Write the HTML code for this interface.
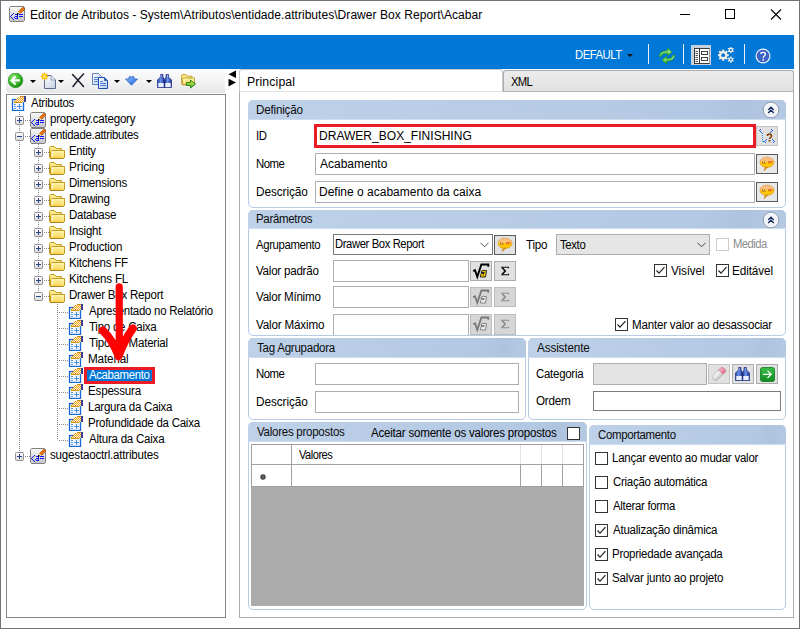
<!DOCTYPE html>
<html><head><meta charset="utf-8"><style>
html,body{margin:0;padding:0;}
body{width:800px;height:629px;position:relative;overflow:hidden;background:#fff;font-family:"Liberation Sans",sans-serif;}
body>div,body>svg{position:absolute;box-sizing:border-box;}
.t{white-space:pre;line-height:20px;font-size:12px;}
</style></head><body>
<div style="left:0px;top:0px;width:800px;height:629px;border:1px solid #727272;"></div>
<svg style="left:9px;top:6px;" width="16" height="16" viewBox="0 0 16 16"><use href="#attr" x="0" y="0" width="16" height="16"/></svg>
<div style="left:680px;top:14px;width:10px;height:1px;background:#000;"></div>
<div style="left:725px;top:9px;width:10px;height:10px;border:1px solid #000;"></div>
<svg style="left:770px;top:9px;" width="12" height="11" viewBox="0 0 12 11"><path d="M1 0.5 L11 10.5 M11 0.5 L1 10.5" stroke="#000" stroke-width="1.1"/></svg>
<div style="left:6px;top:35px;width:788px;height:34px;background:#0078d7;"></div>
<svg style="left:627px;top:54px;" width="6" height="3" viewBox="0 0 6 3"><path d="M0 0h6L3 3z" fill="#111"/></svg>
<div style="left:648px;top:44px;width:1px;height:20px;background:#e8f1fa;"></div>
<div style="left:683px;top:44px;width:1px;height:20px;background:#e8f1fa;"></div>
<div style="left:744px;top:44px;width:1px;height:20px;background:#e8f1fa;"></div>
<svg style="left:655px;top:44px;" width="24" height="24" viewBox="0 0 24 24">
<defs><linearGradient id="gRef" x1="0" y1="0" x2="0" y2="1"><stop offset="0" stop-color="#a6f29a"/><stop offset="1" stop-color="#4cc043"/></linearGradient></defs>
<path d="M4.3 12.8 C4.3 9 7 6.8 12.5 6.8 L12.5 4.2 L17 8 L12.5 11.6 L12.5 9.2 C9 9.2 6.8 10 5.6 12.8 Z" fill="url(#gRef)" stroke="#26961e" stroke-width="0.8"/>
<path d="M19.7 11 C19.7 14.8 17 17.2 11.5 17.2 L11.5 19.8 L7 16 L11.5 12.4 L11.5 14.8 C15 14.8 17.2 14 18.4 11 Z" fill="url(#gRef)" stroke="#26961e" stroke-width="0.8"/>
</svg>
<div style="left:691px;top:45px;width:20px;height:20px;background:#c5d1df;"></div>
<svg style="left:694px;top:48px;" width="16" height="16" viewBox="0 0 16 16"><rect x="0.5" y="0.5" width="15" height="15" fill="#fff" stroke="#3a3a3a"/><path d="M15.5 0.5 V15.5" stroke="#9a9a9a"/><path d="M5.5 0.5v15" stroke="#3a3a3a"/><path d="M1.5 3.5h2.5" stroke="#555"/><path d="M1.5 5.5h2.5" stroke="#555"/><path d="M1.5 7.5h2.5" stroke="#555"/><path d="M1.5 9.5h2.5" stroke="#555"/><path d="M1.5 11.5h2.5" stroke="#555"/><path d="M1.5 13.5h2.5" stroke="#555"/><rect x="7.5" y="3.5" width="6" height="3" fill="#fff" stroke="#444"/><rect x="7.5" y="9.5" width="6" height="3" fill="#fff" stroke="#444"/></svg>
<svg style="left:718px;top:47px;" width="17" height="17" viewBox="0 0 17 17"><circle cx="5.2" cy="8.2" r="4.2" fill="#f0ede6"/><rect x="4.20" y="2.60" width="2.0" height="2.20" fill="#f0ede6" transform="rotate(0.0 5.2 8.2)"/><rect x="4.20" y="2.60" width="2.0" height="2.20" fill="#f0ede6" transform="rotate(45.0 5.2 8.2)"/><rect x="4.20" y="2.60" width="2.0" height="2.20" fill="#f0ede6" transform="rotate(90.0 5.2 8.2)"/><rect x="4.20" y="2.60" width="2.0" height="2.20" fill="#f0ede6" transform="rotate(135.0 5.2 8.2)"/><rect x="4.20" y="2.60" width="2.0" height="2.20" fill="#f0ede6" transform="rotate(180.0 5.2 8.2)"/><rect x="4.20" y="2.60" width="2.0" height="2.20" fill="#f0ede6" transform="rotate(225.0 5.2 8.2)"/><rect x="4.20" y="2.60" width="2.0" height="2.20" fill="#f0ede6" transform="rotate(270.0 5.2 8.2)"/><rect x="4.20" y="2.60" width="2.0" height="2.20" fill="#f0ede6" transform="rotate(315.0 5.2 8.2)"/><circle cx="5.2" cy="8.2" r="1.9" fill="#0078d7"/><circle cx="12.8" cy="3.0" r="2.2" fill="#f0ede6"/><rect x="12.15" y="-0.20" width="1.3" height="1.80" fill="#f0ede6" transform="rotate(0.0 12.8 3.0)"/><rect x="12.15" y="-0.20" width="1.3" height="1.80" fill="#f0ede6" transform="rotate(60.0 12.8 3.0)"/><rect x="12.15" y="-0.20" width="1.3" height="1.80" fill="#f0ede6" transform="rotate(120.0 12.8 3.0)"/><rect x="12.15" y="-0.20" width="1.3" height="1.80" fill="#f0ede6" transform="rotate(180.0 12.8 3.0)"/><rect x="12.15" y="-0.20" width="1.3" height="1.80" fill="#f0ede6" transform="rotate(240.0 12.8 3.0)"/><rect x="12.15" y="-0.20" width="1.3" height="1.80" fill="#f0ede6" transform="rotate(300.0 12.8 3.0)"/><circle cx="12.8" cy="3.0" r="1.0" fill="#0078d7"/><circle cx="12.8" cy="12.6" r="2.2" fill="#f0ede6"/><rect x="12.15" y="9.40" width="1.3" height="1.80" fill="#f0ede6" transform="rotate(0.0 12.8 12.6)"/><rect x="12.15" y="9.40" width="1.3" height="1.80" fill="#f0ede6" transform="rotate(60.0 12.8 12.6)"/><rect x="12.15" y="9.40" width="1.3" height="1.80" fill="#f0ede6" transform="rotate(120.0 12.8 12.6)"/><rect x="12.15" y="9.40" width="1.3" height="1.80" fill="#f0ede6" transform="rotate(180.0 12.8 12.6)"/><rect x="12.15" y="9.40" width="1.3" height="1.80" fill="#f0ede6" transform="rotate(240.0 12.8 12.6)"/><rect x="12.15" y="9.40" width="1.3" height="1.80" fill="#f0ede6" transform="rotate(300.0 12.8 12.6)"/><circle cx="12.8" cy="12.6" r="1.0" fill="#0078d7"/></svg>
<svg style="left:755px;top:48px;" width="16" height="16" viewBox="0 0 16 16">
<circle cx="8" cy="8" r="7.5" fill="#f2f4fa"/>
<circle cx="8" cy="8" r="6.3" fill="#3a63c8"/>
<path d="M5.8 6 C5.8 3.8 10.4 3.8 10.4 6 C10.4 7.8 8.2 8 8.2 10.2" stroke="#fff" stroke-width="1.35" fill="none"/>
<rect x="7.5" y="11.2" width="1.5" height="1.5" fill="#fff"/>
</svg>
<div style="left:6px;top:69px;width:219px;height:24px;background:linear-gradient(#fdfdfd,#f1f1f1 60%,#e6e6e6);border-radius:0 0 0 3px;"></div>
<svg style="left:8px;top:73px;" width="16" height="16" viewBox="0 0 16 16"><defs><radialGradient id="gBack" cx="0.35" cy="0.3" r="0.75"><stop offset="0" stop-color="#8ee66e"/><stop offset="0.6" stop-color="#38b82a"/><stop offset="1" stop-color="#12880e"/></radialGradient></defs>
<circle cx="7.5" cy="7.4" r="7.3" fill="url(#gBack)" stroke="#1a8a14" stroke-width="0.6"/>
<path d="M7.6 3.3 L3.6 7.4 L7.6 11.5 M4.3 7.4 H11.8" stroke="#fff" stroke-width="2.2" fill="none"/></svg>
<svg style="left:30px;top:80px;" width="6" height="3" viewBox="0 0 6 3"><path d="M0 0h6L3 3z" fill="#000"/></svg>
<svg style="left:40px;top:72px;" width="17" height="17" viewBox="0 0 17 17"><defs><linearGradient id="gPg" x1="0" y1="0" x2="1" y2="1"><stop offset="0" stop-color="#ffffff"/><stop offset="1" stop-color="#c4cfe0"/></linearGradient><radialGradient id="gStar"><stop offset="0" stop-color="#fff4a0"/><stop offset="0.5" stop-color="#ffc800"/><stop offset="1" stop-color="#ff8a00"/></radialGradient></defs>
<path d="M4.5 3.5 H11 L15.5 8 V16.5 H4.5 Z" fill="url(#gPg)" stroke="#5a6a88"/>
<path d="M11 3.5 V8 H15.5" fill="#e8edf5" stroke="#7a8aa8" stroke-width="0.8"/>
<polygon points="8.70,4.50 6.90,5.49 7.47,7.47 5.49,6.90 4.50,8.70 3.51,6.90 1.53,7.47 2.10,5.49 0.30,4.50 2.10,3.51 1.53,1.53 3.51,2.10 4.50,0.30 5.49,2.10 7.47,1.53 6.90,3.51" fill="url(#gStar)"/></svg>
<svg style="left:58px;top:80px;" width="6" height="3" viewBox="0 0 6 3"><path d="M0 0h6L3 3z" fill="#000"/></svg>
<svg style="left:71px;top:73px;" width="14" height="15" viewBox="0 0 14 15"><path d="M1.5 1.5 Q6 6 12.5 13.5" stroke="#1a1a2a" stroke-width="1.5" fill="none" stroke-linecap="round"/><path d="M12.5 1 Q7 6.5 2 13.5" stroke="#1a1a2a" stroke-width="1.5" fill="none" stroke-linecap="round"/></svg>
<svg style="left:92px;top:73px;" width="16" height="16" viewBox="0 0 16 16"><defs><linearGradient id="gDoc" x1="0" y1="0" x2="1" y2="1"><stop offset="0" stop-color="#ffffff"/><stop offset="1" stop-color="#b8cdf0"/></linearGradient></defs>
<path d="M0.5 0.5 H6.5 L9.5 3.5 V11.5 H0.5 Z" fill="url(#gDoc)" stroke="#3a64b4" stroke-width="0.8"/>
<path d="M2 4.5h5M2 6.5h5M2 8.5h5" stroke="#4a7cd0" stroke-width="0.9"/>
<path d="M6.5 4.5 H12.5 L15.5 7.5 V15.5 H6.5 Z" fill="url(#gDoc)" stroke="#1f4ea8"/>
<path d="M8 8.5h3M8 10.5h6M8 12.5h6" stroke="#3a72cc" stroke-width="0.9"/>
<path d="M12.5 4.5 V7.5 H15.5" fill="#2a5ab8" stroke="#2a5ab8" stroke-width="0.8"/></svg>
<svg style="left:114px;top:80px;" width="6" height="3" viewBox="0 0 6 3"><path d="M0 0h6L3 3z" fill="#000"/></svg>
<svg style="left:125px;top:76px;" width="13" height="10" viewBox="0 0 13 10"><defs><linearGradient id="gDn" x1="0" y1="0" x2="1" y2="1"><stop offset="0" stop-color="#8ec4ff"/><stop offset="1" stop-color="#1a5ed8"/></linearGradient></defs>
<path d="M4 0.8 H9 V3 H12.5 L6.5 9.2 L0.5 3 H4 Z" fill="url(#gDn)" stroke="#1f56c0" stroke-width="0.7"/></svg>
<svg style="left:146px;top:80px;" width="6" height="3" viewBox="0 0 6 3"><path d="M0 0h6L3 3z" fill="#000"/></svg>
<svg style="left:157px;top:74px;" width="15" height="14" viewBox="0 0 15 14"><defs><linearGradient id="gB3" x1="0" y1="0" x2="1" y2="0"><stop offset="0" stop-color="#24409a"/><stop offset="0.45" stop-color="#6a92e8"/><stop offset="1" stop-color="#1c3090"/></linearGradient></defs>
<path d="M3.5 0.5 H6 V3 L7.5 5.5 V13.5 H0.5 V6 L3.5 3 Z" fill="url(#gB3)" stroke="#1a2a80" stroke-width="0.7"/>
<path d="M9 0.5 H11.5 V3 L14.5 6 V13.5 H7.5 V5.5 L9 3 Z" fill="url(#gB3)" stroke="#1a2a80" stroke-width="0.7"/>
<rect x="6.5" y="6" width="2" height="3" fill="#1c2c80"/>
<rect x="1.3" y="9" width="5.4" height="4" fill="#e8eefc"/><rect x="8.3" y="9" width="5.4" height="4" fill="#e8eefc"/>
<path d="M4 1.5v1.5M10.5 1.5v1.5" stroke="#c8d8ff" stroke-width="0.8"/></svg>
<svg style="left:181px;top:73px;" width="16" height="16" viewBox="0 0 16 16"><use href="#fold" x="0" y="1" width="14" height="11.4"/>
<defs><linearGradient id="gArr" x1="0" y1="0" x2="0" y2="1"><stop offset="0" stop-color="#c8f060"/><stop offset="1" stop-color="#5ab020"/></linearGradient></defs>
<path d="M5.5 9.5 H9.5 V7 L14.5 11 L9.5 15 V12.5 H5.5 Z" fill="url(#gArr)" stroke="#1f7a10" stroke-width="0.9" stroke-linejoin="round"/></svg>
<svg style="left:228px;top:70px;" width="9" height="17" viewBox="0 0 9 17"><path d="M8 0.5 V8 L0.5 4.2 Z" fill="#000"/><path d="M0.5 8.8 V16.5 L8 12.6 Z" fill="#000"/></svg>
<div style="left:6px;top:94px;width:220px;height:524px;border:1px solid #828790;background:#fff;"></div>
<div style="left:84px;top:367px;width:71px;height:17px;background:#0078d7;border:3px solid #ec1c24;"></div>
<svg style="left:0;top:0" width="800" height="629" viewBox="0 0 800 629">

<defs>
<linearGradient id="gGray" x1="0" y1="0" x2="0" y2="1"><stop offset="0" stop-color="#fbfbfb"/><stop offset="1" stop-color="#c4c4c4"/></linearGradient>
<linearGradient id="gExp" x1="0" y1="0" x2="0" y2="1"><stop offset="0" stop-color="#ffffff"/><stop offset="1" stop-color="#d8d8d8"/></linearGradient>
<linearGradient id="gFold" x1="0" y1="0" x2="0" y2="1"><stop offset="0" stop-color="#fff7b0"/><stop offset="1" stop-color="#f7cf4a"/></linearGradient>
<symbol id="tbl" viewBox="0 0 16 17">
<rect x="2.5" y="5.5" width="11" height="11" fill="#f6faff" stroke="#1468d8" stroke-width="1.3"/>
<path d="M4 10.5h2M4 12.5h2M4 14.5h2" stroke="#5d9de8"/>
<path d="M7 12.5h5M9.5 10v5" stroke="#4d90e4" stroke-width="1.2"/>
<rect x="10" y="2" width="1" height="1" fill="#d98a10"/><rect x="11" y="2" width="1" height="1" fill="#d98a10"/><rect x="12" y="2" width="1" height="1" fill="#d98a10"/><rect x="13" y="2" width="1" height="1" fill="#d98a10"/><rect x="8" y="3" width="1" height="1" fill="#d98a10"/><rect x="9" y="3" width="1" height="1" fill="#fff4d0"/><rect x="10" y="3" width="1" height="1" fill="#eea428"/><rect x="11" y="3" width="1" height="1" fill="#fff4d0"/><rect x="12" y="3" width="1" height="1" fill="#eea428"/><rect x="13" y="3" width="1" height="1" fill="#fff4d0"/><rect x="7" y="4" width="1" height="1" fill="#d98a10"/><rect x="8" y="4" width="1" height="1" fill="#fff4d0"/><rect x="9" y="4" width="1" height="1" fill="#eea428"/><rect x="10" y="4" width="1" height="1" fill="#fff4d0"/><rect x="11" y="4" width="1" height="1" fill="#eea428"/><rect x="12" y="4" width="1" height="1" fill="#fff4d0"/><rect x="13" y="4" width="1" height="1" fill="#eea428"/><rect x="6" y="5" width="1" height="1" fill="#d98a10"/><rect x="7" y="5" width="1" height="1" fill="#fff4d0"/><rect x="8" y="5" width="1" height="1" fill="#eea428"/><rect x="9" y="5" width="1" height="1" fill="#fff4d0"/><rect x="10" y="5" width="1" height="1" fill="#eea428"/><rect x="11" y="5" width="1" height="1" fill="#fff4d0"/><rect x="12" y="5" width="1" height="1" fill="#eea428"/><rect x="13" y="5" width="1" height="1" fill="#fff4d0"/><rect x="5" y="6" width="1" height="1" fill="#d98a10"/><rect x="6" y="6" width="1" height="1" fill="#fff4d0"/><rect x="7" y="6" width="1" height="1" fill="#eea428"/><rect x="8" y="6" width="1" height="1" fill="#fff4d0"/><rect x="9" y="6" width="1" height="1" fill="#eea428"/><rect x="10" y="6" width="1" height="1" fill="#fff4d0"/><rect x="11" y="6" width="1" height="1" fill="#eea428"/><rect x="12" y="6" width="1" height="1" fill="#fff4d0"/><rect x="13" y="6" width="1" height="1" fill="#eea428"/><rect x="4" y="7" width="1" height="1" fill="#d98a10"/><rect x="5" y="7" width="1" height="1" fill="#fff4d0"/><rect x="6" y="7" width="1" height="1" fill="#eea428"/><rect x="7" y="7" width="1" height="1" fill="#fff4d0"/><rect x="8" y="7" width="1" height="1" fill="#eea428"/><rect x="9" y="7" width="1" height="1" fill="#fff4d0"/><rect x="10" y="7" width="1" height="1" fill="#eea428"/><rect x="11" y="7" width="1" height="1" fill="#fff4d0"/><rect x="12" y="7" width="1" height="1" fill="#eea428"/><rect x="13" y="7" width="1" height="1" fill="#fff4d0"/><rect x="4" y="8" width="1" height="1" fill="#d98a10"/><rect x="5" y="8" width="1" height="1" fill="#d98a10"/><rect x="6" y="8" width="1" height="1" fill="#d98a10"/><rect x="7" y="8" width="1" height="1" fill="#d98a10"/><rect x="8" y="8" width="1" height="1" fill="#d98a10"/><rect x="9" y="8" width="1" height="1" fill="#d98a10"/><rect x="10" y="8" width="1" height="1" fill="#d98a10"/><rect x="11" y="8" width="1" height="1" fill="#d98a10"/>
<rect x="14" y="2" width="2" height="6" fill="#3a3f90"/>
</symbol>
<symbol id="attr" viewBox="0 0 16 16">
<path d="M1.5 0.5 H14.5 L15.5 1.5 V14.5 L14.5 15.5 H1.5 L0.5 14.5 V1.5 Z" fill="url(#gGray)" stroke="#808080"/>
<g fill="#1414ff">
<rect x="4" y="7" width="1" height="1"/><rect x="3" y="8" width="1" height="1"/><rect x="2" y="9" width="1" height="1"/><rect x="1" y="10" width="1" height="1"/><rect x="2" y="11" width="1" height="1"/><rect x="3" y="12" width="1" height="1"/><rect x="4" y="13" width="1" height="1"/>
<rect x="6" y="8" width="3" height="1"/><rect x="8" y="9" width="1" height="4"/><rect x="6" y="10" width="3" height="1"/><rect x="5" y="11" width="1" height="1"/><rect x="6" y="12" width="3" height="1"/>
<rect x="10" y="8" width="4" height="1"/><rect x="10" y="10" width="4" height="1"/>
</g>
<path d="M9.5 5.5 L14 1 L16 3 L11.5 7.5 Z" fill="#e6730c" stroke="#9a4a08" stroke-width="0.6"/>
<path d="M9.5 5.5 L11.5 7.5 L9.5 8 L8.7 7.2 Z" fill="#f8d89a"/>
<path d="M8.7 7.2 L9.5 8 L8 8.5 Z" fill="#000" stroke="#000" stroke-width="0.8"/>
</symbol>
<symbol id="fold" viewBox="0 0 16 13">
<path d="M0.5 11.5 V1.5 L1.5 0.5 H5.5 L7 2.5 H12.5 V4.5" fill="#fbe88a" stroke="#bf9a24"/>
<path d="M2.5 4.5 H15.5 V11.5 L14.5 12.5 H2.5 L1.5 11.5 V5.5 Z" fill="url(#gFold)" stroke="#bf9a24"/>
<path d="M1 12.5 H14" stroke="#a8861a"/>
<path d="M3.5 6 V11" stroke="#fffbd8"/>
<path d="M13.5 6 V11" stroke="#fff4b8"/>
</symbol>
<symbol id="plus" viewBox="0 0 9 9">
<rect x="0.5" y="0.5" width="8" height="8" rx="1" fill="url(#gExp)" stroke="#8f8f8f"/>
<path d="M2 4.5h5M4.5 2v5" stroke="#27468a"/>
</symbol>
<symbol id="minus" viewBox="0 0 9 9">
<rect x="0.5" y="0.5" width="8" height="8" rx="1" fill="url(#gExp)" stroke="#8f8f8f"/>
<path d="M2 4.5h5" stroke="#27468a"/>
</symbol>
</defs>

<rect x="19" y="112" width="1" height="1" fill="#8a8a8a"/>
<rect x="19" y="114" width="1" height="1" fill="#8a8a8a"/>
<rect x="19" y="116" width="1" height="1" fill="#8a8a8a"/>
<rect x="19" y="118" width="1" height="1" fill="#8a8a8a"/>
<rect x="19" y="120" width="1" height="1" fill="#8a8a8a"/>
<rect x="19" y="122" width="1" height="1" fill="#8a8a8a"/>
<rect x="19" y="124" width="1" height="1" fill="#8a8a8a"/>
<rect x="19" y="126" width="1" height="1" fill="#8a8a8a"/>
<rect x="19" y="128" width="1" height="1" fill="#8a8a8a"/>
<rect x="19" y="130" width="1" height="1" fill="#8a8a8a"/>
<rect x="19" y="132" width="1" height="1" fill="#8a8a8a"/>
<rect x="19" y="134" width="1" height="1" fill="#8a8a8a"/>
<rect x="19" y="136" width="1" height="1" fill="#8a8a8a"/>
<rect x="19" y="138" width="1" height="1" fill="#8a8a8a"/>
<rect x="19" y="140" width="1" height="1" fill="#8a8a8a"/>
<rect x="19" y="142" width="1" height="1" fill="#8a8a8a"/>
<rect x="19" y="144" width="1" height="1" fill="#8a8a8a"/>
<rect x="19" y="146" width="1" height="1" fill="#8a8a8a"/>
<rect x="19" y="148" width="1" height="1" fill="#8a8a8a"/>
<rect x="19" y="150" width="1" height="1" fill="#8a8a8a"/>
<rect x="19" y="152" width="1" height="1" fill="#8a8a8a"/>
<rect x="19" y="154" width="1" height="1" fill="#8a8a8a"/>
<rect x="19" y="156" width="1" height="1" fill="#8a8a8a"/>
<rect x="19" y="158" width="1" height="1" fill="#8a8a8a"/>
<rect x="19" y="160" width="1" height="1" fill="#8a8a8a"/>
<rect x="19" y="162" width="1" height="1" fill="#8a8a8a"/>
<rect x="19" y="164" width="1" height="1" fill="#8a8a8a"/>
<rect x="19" y="166" width="1" height="1" fill="#8a8a8a"/>
<rect x="19" y="168" width="1" height="1" fill="#8a8a8a"/>
<rect x="19" y="170" width="1" height="1" fill="#8a8a8a"/>
<rect x="19" y="172" width="1" height="1" fill="#8a8a8a"/>
<rect x="19" y="174" width="1" height="1" fill="#8a8a8a"/>
<rect x="19" y="176" width="1" height="1" fill="#8a8a8a"/>
<rect x="19" y="178" width="1" height="1" fill="#8a8a8a"/>
<rect x="19" y="180" width="1" height="1" fill="#8a8a8a"/>
<rect x="19" y="182" width="1" height="1" fill="#8a8a8a"/>
<rect x="19" y="184" width="1" height="1" fill="#8a8a8a"/>
<rect x="19" y="186" width="1" height="1" fill="#8a8a8a"/>
<rect x="19" y="188" width="1" height="1" fill="#8a8a8a"/>
<rect x="19" y="190" width="1" height="1" fill="#8a8a8a"/>
<rect x="19" y="192" width="1" height="1" fill="#8a8a8a"/>
<rect x="19" y="194" width="1" height="1" fill="#8a8a8a"/>
<rect x="19" y="196" width="1" height="1" fill="#8a8a8a"/>
<rect x="19" y="198" width="1" height="1" fill="#8a8a8a"/>
<rect x="19" y="200" width="1" height="1" fill="#8a8a8a"/>
<rect x="19" y="202" width="1" height="1" fill="#8a8a8a"/>
<rect x="19" y="204" width="1" height="1" fill="#8a8a8a"/>
<rect x="19" y="206" width="1" height="1" fill="#8a8a8a"/>
<rect x="19" y="208" width="1" height="1" fill="#8a8a8a"/>
<rect x="19" y="210" width="1" height="1" fill="#8a8a8a"/>
<rect x="19" y="212" width="1" height="1" fill="#8a8a8a"/>
<rect x="19" y="214" width="1" height="1" fill="#8a8a8a"/>
<rect x="19" y="216" width="1" height="1" fill="#8a8a8a"/>
<rect x="19" y="218" width="1" height="1" fill="#8a8a8a"/>
<rect x="19" y="220" width="1" height="1" fill="#8a8a8a"/>
<rect x="19" y="222" width="1" height="1" fill="#8a8a8a"/>
<rect x="19" y="224" width="1" height="1" fill="#8a8a8a"/>
<rect x="19" y="226" width="1" height="1" fill="#8a8a8a"/>
<rect x="19" y="228" width="1" height="1" fill="#8a8a8a"/>
<rect x="19" y="230" width="1" height="1" fill="#8a8a8a"/>
<rect x="19" y="232" width="1" height="1" fill="#8a8a8a"/>
<rect x="19" y="234" width="1" height="1" fill="#8a8a8a"/>
<rect x="19" y="236" width="1" height="1" fill="#8a8a8a"/>
<rect x="19" y="238" width="1" height="1" fill="#8a8a8a"/>
<rect x="19" y="240" width="1" height="1" fill="#8a8a8a"/>
<rect x="19" y="242" width="1" height="1" fill="#8a8a8a"/>
<rect x="19" y="244" width="1" height="1" fill="#8a8a8a"/>
<rect x="19" y="246" width="1" height="1" fill="#8a8a8a"/>
<rect x="19" y="248" width="1" height="1" fill="#8a8a8a"/>
<rect x="19" y="250" width="1" height="1" fill="#8a8a8a"/>
<rect x="19" y="252" width="1" height="1" fill="#8a8a8a"/>
<rect x="19" y="254" width="1" height="1" fill="#8a8a8a"/>
<rect x="19" y="256" width="1" height="1" fill="#8a8a8a"/>
<rect x="19" y="258" width="1" height="1" fill="#8a8a8a"/>
<rect x="19" y="260" width="1" height="1" fill="#8a8a8a"/>
<rect x="19" y="262" width="1" height="1" fill="#8a8a8a"/>
<rect x="19" y="264" width="1" height="1" fill="#8a8a8a"/>
<rect x="19" y="266" width="1" height="1" fill="#8a8a8a"/>
<rect x="19" y="268" width="1" height="1" fill="#8a8a8a"/>
<rect x="19" y="270" width="1" height="1" fill="#8a8a8a"/>
<rect x="19" y="272" width="1" height="1" fill="#8a8a8a"/>
<rect x="19" y="274" width="1" height="1" fill="#8a8a8a"/>
<rect x="19" y="276" width="1" height="1" fill="#8a8a8a"/>
<rect x="19" y="278" width="1" height="1" fill="#8a8a8a"/>
<rect x="19" y="280" width="1" height="1" fill="#8a8a8a"/>
<rect x="19" y="282" width="1" height="1" fill="#8a8a8a"/>
<rect x="19" y="284" width="1" height="1" fill="#8a8a8a"/>
<rect x="19" y="286" width="1" height="1" fill="#8a8a8a"/>
<rect x="19" y="288" width="1" height="1" fill="#8a8a8a"/>
<rect x="19" y="290" width="1" height="1" fill="#8a8a8a"/>
<rect x="19" y="292" width="1" height="1" fill="#8a8a8a"/>
<rect x="19" y="294" width="1" height="1" fill="#8a8a8a"/>
<rect x="19" y="296" width="1" height="1" fill="#8a8a8a"/>
<rect x="19" y="298" width="1" height="1" fill="#8a8a8a"/>
<rect x="19" y="300" width="1" height="1" fill="#8a8a8a"/>
<rect x="19" y="302" width="1" height="1" fill="#8a8a8a"/>
<rect x="19" y="304" width="1" height="1" fill="#8a8a8a"/>
<rect x="19" y="306" width="1" height="1" fill="#8a8a8a"/>
<rect x="19" y="308" width="1" height="1" fill="#8a8a8a"/>
<rect x="19" y="310" width="1" height="1" fill="#8a8a8a"/>
<rect x="19" y="312" width="1" height="1" fill="#8a8a8a"/>
<rect x="19" y="314" width="1" height="1" fill="#8a8a8a"/>
<rect x="19" y="316" width="1" height="1" fill="#8a8a8a"/>
<rect x="19" y="318" width="1" height="1" fill="#8a8a8a"/>
<rect x="19" y="320" width="1" height="1" fill="#8a8a8a"/>
<rect x="19" y="322" width="1" height="1" fill="#8a8a8a"/>
<rect x="19" y="324" width="1" height="1" fill="#8a8a8a"/>
<rect x="19" y="326" width="1" height="1" fill="#8a8a8a"/>
<rect x="19" y="328" width="1" height="1" fill="#8a8a8a"/>
<rect x="19" y="330" width="1" height="1" fill="#8a8a8a"/>
<rect x="19" y="332" width="1" height="1" fill="#8a8a8a"/>
<rect x="19" y="334" width="1" height="1" fill="#8a8a8a"/>
<rect x="19" y="336" width="1" height="1" fill="#8a8a8a"/>
<rect x="19" y="338" width="1" height="1" fill="#8a8a8a"/>
<rect x="19" y="340" width="1" height="1" fill="#8a8a8a"/>
<rect x="19" y="342" width="1" height="1" fill="#8a8a8a"/>
<rect x="19" y="344" width="1" height="1" fill="#8a8a8a"/>
<rect x="19" y="346" width="1" height="1" fill="#8a8a8a"/>
<rect x="19" y="348" width="1" height="1" fill="#8a8a8a"/>
<rect x="19" y="350" width="1" height="1" fill="#8a8a8a"/>
<rect x="19" y="352" width="1" height="1" fill="#8a8a8a"/>
<rect x="19" y="354" width="1" height="1" fill="#8a8a8a"/>
<rect x="19" y="356" width="1" height="1" fill="#8a8a8a"/>
<rect x="19" y="358" width="1" height="1" fill="#8a8a8a"/>
<rect x="19" y="360" width="1" height="1" fill="#8a8a8a"/>
<rect x="19" y="362" width="1" height="1" fill="#8a8a8a"/>
<rect x="19" y="364" width="1" height="1" fill="#8a8a8a"/>
<rect x="19" y="366" width="1" height="1" fill="#8a8a8a"/>
<rect x="19" y="368" width="1" height="1" fill="#8a8a8a"/>
<rect x="19" y="370" width="1" height="1" fill="#8a8a8a"/>
<rect x="19" y="372" width="1" height="1" fill="#8a8a8a"/>
<rect x="19" y="374" width="1" height="1" fill="#8a8a8a"/>
<rect x="19" y="376" width="1" height="1" fill="#8a8a8a"/>
<rect x="19" y="378" width="1" height="1" fill="#8a8a8a"/>
<rect x="19" y="380" width="1" height="1" fill="#8a8a8a"/>
<rect x="19" y="382" width="1" height="1" fill="#8a8a8a"/>
<rect x="19" y="384" width="1" height="1" fill="#8a8a8a"/>
<rect x="19" y="386" width="1" height="1" fill="#8a8a8a"/>
<rect x="19" y="388" width="1" height="1" fill="#8a8a8a"/>
<rect x="19" y="390" width="1" height="1" fill="#8a8a8a"/>
<rect x="19" y="392" width="1" height="1" fill="#8a8a8a"/>
<rect x="19" y="394" width="1" height="1" fill="#8a8a8a"/>
<rect x="19" y="396" width="1" height="1" fill="#8a8a8a"/>
<rect x="19" y="398" width="1" height="1" fill="#8a8a8a"/>
<rect x="19" y="400" width="1" height="1" fill="#8a8a8a"/>
<rect x="19" y="402" width="1" height="1" fill="#8a8a8a"/>
<rect x="19" y="404" width="1" height="1" fill="#8a8a8a"/>
<rect x="19" y="406" width="1" height="1" fill="#8a8a8a"/>
<rect x="19" y="408" width="1" height="1" fill="#8a8a8a"/>
<rect x="19" y="410" width="1" height="1" fill="#8a8a8a"/>
<rect x="19" y="412" width="1" height="1" fill="#8a8a8a"/>
<rect x="19" y="414" width="1" height="1" fill="#8a8a8a"/>
<rect x="19" y="416" width="1" height="1" fill="#8a8a8a"/>
<rect x="19" y="418" width="1" height="1" fill="#8a8a8a"/>
<rect x="19" y="420" width="1" height="1" fill="#8a8a8a"/>
<rect x="19" y="422" width="1" height="1" fill="#8a8a8a"/>
<rect x="19" y="424" width="1" height="1" fill="#8a8a8a"/>
<rect x="19" y="426" width="1" height="1" fill="#8a8a8a"/>
<rect x="19" y="428" width="1" height="1" fill="#8a8a8a"/>
<rect x="19" y="430" width="1" height="1" fill="#8a8a8a"/>
<rect x="19" y="432" width="1" height="1" fill="#8a8a8a"/>
<rect x="19" y="434" width="1" height="1" fill="#8a8a8a"/>
<rect x="19" y="436" width="1" height="1" fill="#8a8a8a"/>
<rect x="19" y="438" width="1" height="1" fill="#8a8a8a"/>
<rect x="19" y="440" width="1" height="1" fill="#8a8a8a"/>
<rect x="19" y="442" width="1" height="1" fill="#8a8a8a"/>
<rect x="19" y="444" width="1" height="1" fill="#8a8a8a"/>
<rect x="19" y="446" width="1" height="1" fill="#8a8a8a"/>
<rect x="19" y="448" width="1" height="1" fill="#8a8a8a"/>
<rect x="19" y="450" width="1" height="1" fill="#8a8a8a"/>
<rect x="19" y="452" width="1" height="1" fill="#8a8a8a"/>
<rect x="19" y="454" width="1" height="1" fill="#8a8a8a"/>
<rect x="38" y="144" width="1" height="1" fill="#8a8a8a"/>
<rect x="38" y="146" width="1" height="1" fill="#8a8a8a"/>
<rect x="38" y="148" width="1" height="1" fill="#8a8a8a"/>
<rect x="38" y="150" width="1" height="1" fill="#8a8a8a"/>
<rect x="38" y="152" width="1" height="1" fill="#8a8a8a"/>
<rect x="38" y="154" width="1" height="1" fill="#8a8a8a"/>
<rect x="38" y="156" width="1" height="1" fill="#8a8a8a"/>
<rect x="38" y="158" width="1" height="1" fill="#8a8a8a"/>
<rect x="38" y="160" width="1" height="1" fill="#8a8a8a"/>
<rect x="38" y="162" width="1" height="1" fill="#8a8a8a"/>
<rect x="38" y="164" width="1" height="1" fill="#8a8a8a"/>
<rect x="38" y="166" width="1" height="1" fill="#8a8a8a"/>
<rect x="38" y="168" width="1" height="1" fill="#8a8a8a"/>
<rect x="38" y="170" width="1" height="1" fill="#8a8a8a"/>
<rect x="38" y="172" width="1" height="1" fill="#8a8a8a"/>
<rect x="38" y="174" width="1" height="1" fill="#8a8a8a"/>
<rect x="38" y="176" width="1" height="1" fill="#8a8a8a"/>
<rect x="38" y="178" width="1" height="1" fill="#8a8a8a"/>
<rect x="38" y="180" width="1" height="1" fill="#8a8a8a"/>
<rect x="38" y="182" width="1" height="1" fill="#8a8a8a"/>
<rect x="38" y="184" width="1" height="1" fill="#8a8a8a"/>
<rect x="38" y="186" width="1" height="1" fill="#8a8a8a"/>
<rect x="38" y="188" width="1" height="1" fill="#8a8a8a"/>
<rect x="38" y="190" width="1" height="1" fill="#8a8a8a"/>
<rect x="38" y="192" width="1" height="1" fill="#8a8a8a"/>
<rect x="38" y="194" width="1" height="1" fill="#8a8a8a"/>
<rect x="38" y="196" width="1" height="1" fill="#8a8a8a"/>
<rect x="38" y="198" width="1" height="1" fill="#8a8a8a"/>
<rect x="38" y="200" width="1" height="1" fill="#8a8a8a"/>
<rect x="38" y="202" width="1" height="1" fill="#8a8a8a"/>
<rect x="38" y="204" width="1" height="1" fill="#8a8a8a"/>
<rect x="38" y="206" width="1" height="1" fill="#8a8a8a"/>
<rect x="38" y="208" width="1" height="1" fill="#8a8a8a"/>
<rect x="38" y="210" width="1" height="1" fill="#8a8a8a"/>
<rect x="38" y="212" width="1" height="1" fill="#8a8a8a"/>
<rect x="38" y="214" width="1" height="1" fill="#8a8a8a"/>
<rect x="38" y="216" width="1" height="1" fill="#8a8a8a"/>
<rect x="38" y="218" width="1" height="1" fill="#8a8a8a"/>
<rect x="38" y="220" width="1" height="1" fill="#8a8a8a"/>
<rect x="38" y="222" width="1" height="1" fill="#8a8a8a"/>
<rect x="38" y="224" width="1" height="1" fill="#8a8a8a"/>
<rect x="38" y="226" width="1" height="1" fill="#8a8a8a"/>
<rect x="38" y="228" width="1" height="1" fill="#8a8a8a"/>
<rect x="38" y="230" width="1" height="1" fill="#8a8a8a"/>
<rect x="38" y="232" width="1" height="1" fill="#8a8a8a"/>
<rect x="38" y="234" width="1" height="1" fill="#8a8a8a"/>
<rect x="38" y="236" width="1" height="1" fill="#8a8a8a"/>
<rect x="38" y="238" width="1" height="1" fill="#8a8a8a"/>
<rect x="38" y="240" width="1" height="1" fill="#8a8a8a"/>
<rect x="38" y="242" width="1" height="1" fill="#8a8a8a"/>
<rect x="38" y="244" width="1" height="1" fill="#8a8a8a"/>
<rect x="38" y="246" width="1" height="1" fill="#8a8a8a"/>
<rect x="38" y="248" width="1" height="1" fill="#8a8a8a"/>
<rect x="38" y="250" width="1" height="1" fill="#8a8a8a"/>
<rect x="38" y="252" width="1" height="1" fill="#8a8a8a"/>
<rect x="38" y="254" width="1" height="1" fill="#8a8a8a"/>
<rect x="38" y="256" width="1" height="1" fill="#8a8a8a"/>
<rect x="38" y="258" width="1" height="1" fill="#8a8a8a"/>
<rect x="38" y="260" width="1" height="1" fill="#8a8a8a"/>
<rect x="38" y="262" width="1" height="1" fill="#8a8a8a"/>
<rect x="38" y="264" width="1" height="1" fill="#8a8a8a"/>
<rect x="38" y="266" width="1" height="1" fill="#8a8a8a"/>
<rect x="38" y="268" width="1" height="1" fill="#8a8a8a"/>
<rect x="38" y="270" width="1" height="1" fill="#8a8a8a"/>
<rect x="38" y="272" width="1" height="1" fill="#8a8a8a"/>
<rect x="38" y="274" width="1" height="1" fill="#8a8a8a"/>
<rect x="38" y="276" width="1" height="1" fill="#8a8a8a"/>
<rect x="38" y="278" width="1" height="1" fill="#8a8a8a"/>
<rect x="38" y="280" width="1" height="1" fill="#8a8a8a"/>
<rect x="38" y="282" width="1" height="1" fill="#8a8a8a"/>
<rect x="38" y="284" width="1" height="1" fill="#8a8a8a"/>
<rect x="38" y="286" width="1" height="1" fill="#8a8a8a"/>
<rect x="38" y="288" width="1" height="1" fill="#8a8a8a"/>
<rect x="38" y="290" width="1" height="1" fill="#8a8a8a"/>
<rect x="38" y="292" width="1" height="1" fill="#8a8a8a"/>
<rect x="38" y="294" width="1" height="1" fill="#8a8a8a"/>
<rect x="57" y="304" width="1" height="1" fill="#8a8a8a"/>
<rect x="57" y="306" width="1" height="1" fill="#8a8a8a"/>
<rect x="57" y="308" width="1" height="1" fill="#8a8a8a"/>
<rect x="57" y="310" width="1" height="1" fill="#8a8a8a"/>
<rect x="57" y="312" width="1" height="1" fill="#8a8a8a"/>
<rect x="57" y="314" width="1" height="1" fill="#8a8a8a"/>
<rect x="57" y="316" width="1" height="1" fill="#8a8a8a"/>
<rect x="57" y="318" width="1" height="1" fill="#8a8a8a"/>
<rect x="57" y="320" width="1" height="1" fill="#8a8a8a"/>
<rect x="57" y="322" width="1" height="1" fill="#8a8a8a"/>
<rect x="57" y="324" width="1" height="1" fill="#8a8a8a"/>
<rect x="57" y="326" width="1" height="1" fill="#8a8a8a"/>
<rect x="57" y="328" width="1" height="1" fill="#8a8a8a"/>
<rect x="57" y="330" width="1" height="1" fill="#8a8a8a"/>
<rect x="57" y="332" width="1" height="1" fill="#8a8a8a"/>
<rect x="57" y="334" width="1" height="1" fill="#8a8a8a"/>
<rect x="57" y="336" width="1" height="1" fill="#8a8a8a"/>
<rect x="57" y="338" width="1" height="1" fill="#8a8a8a"/>
<rect x="57" y="340" width="1" height="1" fill="#8a8a8a"/>
<rect x="57" y="342" width="1" height="1" fill="#8a8a8a"/>
<rect x="57" y="344" width="1" height="1" fill="#8a8a8a"/>
<rect x="57" y="346" width="1" height="1" fill="#8a8a8a"/>
<rect x="57" y="348" width="1" height="1" fill="#8a8a8a"/>
<rect x="57" y="350" width="1" height="1" fill="#8a8a8a"/>
<rect x="57" y="352" width="1" height="1" fill="#8a8a8a"/>
<rect x="57" y="354" width="1" height="1" fill="#8a8a8a"/>
<rect x="57" y="356" width="1" height="1" fill="#8a8a8a"/>
<rect x="57" y="358" width="1" height="1" fill="#8a8a8a"/>
<rect x="57" y="360" width="1" height="1" fill="#8a8a8a"/>
<rect x="57" y="362" width="1" height="1" fill="#8a8a8a"/>
<rect x="57" y="364" width="1" height="1" fill="#8a8a8a"/>
<rect x="57" y="366" width="1" height="1" fill="#8a8a8a"/>
<rect x="57" y="368" width="1" height="1" fill="#8a8a8a"/>
<rect x="57" y="370" width="1" height="1" fill="#8a8a8a"/>
<rect x="57" y="372" width="1" height="1" fill="#8a8a8a"/>
<rect x="57" y="374" width="1" height="1" fill="#8a8a8a"/>
<rect x="57" y="376" width="1" height="1" fill="#8a8a8a"/>
<rect x="57" y="378" width="1" height="1" fill="#8a8a8a"/>
<rect x="57" y="380" width="1" height="1" fill="#8a8a8a"/>
<rect x="57" y="382" width="1" height="1" fill="#8a8a8a"/>
<rect x="57" y="384" width="1" height="1" fill="#8a8a8a"/>
<rect x="57" y="386" width="1" height="1" fill="#8a8a8a"/>
<rect x="57" y="388" width="1" height="1" fill="#8a8a8a"/>
<rect x="57" y="390" width="1" height="1" fill="#8a8a8a"/>
<rect x="57" y="392" width="1" height="1" fill="#8a8a8a"/>
<rect x="57" y="394" width="1" height="1" fill="#8a8a8a"/>
<rect x="57" y="396" width="1" height="1" fill="#8a8a8a"/>
<rect x="57" y="398" width="1" height="1" fill="#8a8a8a"/>
<rect x="57" y="400" width="1" height="1" fill="#8a8a8a"/>
<rect x="57" y="402" width="1" height="1" fill="#8a8a8a"/>
<rect x="57" y="404" width="1" height="1" fill="#8a8a8a"/>
<rect x="57" y="406" width="1" height="1" fill="#8a8a8a"/>
<rect x="57" y="408" width="1" height="1" fill="#8a8a8a"/>
<rect x="57" y="410" width="1" height="1" fill="#8a8a8a"/>
<rect x="57" y="412" width="1" height="1" fill="#8a8a8a"/>
<rect x="57" y="414" width="1" height="1" fill="#8a8a8a"/>
<rect x="57" y="416" width="1" height="1" fill="#8a8a8a"/>
<rect x="57" y="418" width="1" height="1" fill="#8a8a8a"/>
<rect x="57" y="420" width="1" height="1" fill="#8a8a8a"/>
<rect x="57" y="422" width="1" height="1" fill="#8a8a8a"/>
<rect x="57" y="424" width="1" height="1" fill="#8a8a8a"/>
<rect x="57" y="426" width="1" height="1" fill="#8a8a8a"/>
<rect x="57" y="428" width="1" height="1" fill="#8a8a8a"/>
<rect x="57" y="430" width="1" height="1" fill="#8a8a8a"/>
<rect x="57" y="432" width="1" height="1" fill="#8a8a8a"/>
<rect x="57" y="434" width="1" height="1" fill="#8a8a8a"/>
<rect x="57" y="436" width="1" height="1" fill="#8a8a8a"/>
<rect x="57" y="438" width="1" height="1" fill="#8a8a8a"/>
<rect x="25" y="120" width="1" height="1" fill="#8a8a8a"/>
<rect x="27" y="120" width="1" height="1" fill="#8a8a8a"/>
<rect x="29" y="120" width="1" height="1" fill="#8a8a8a"/>
<rect x="25" y="136" width="1" height="1" fill="#8a8a8a"/>
<rect x="27" y="136" width="1" height="1" fill="#8a8a8a"/>
<rect x="29" y="136" width="1" height="1" fill="#8a8a8a"/>
<rect x="44" y="152" width="1" height="1" fill="#8a8a8a"/>
<rect x="46" y="152" width="1" height="1" fill="#8a8a8a"/>
<rect x="48" y="152" width="1" height="1" fill="#8a8a8a"/>
<rect x="44" y="168" width="1" height="1" fill="#8a8a8a"/>
<rect x="46" y="168" width="1" height="1" fill="#8a8a8a"/>
<rect x="48" y="168" width="1" height="1" fill="#8a8a8a"/>
<rect x="44" y="184" width="1" height="1" fill="#8a8a8a"/>
<rect x="46" y="184" width="1" height="1" fill="#8a8a8a"/>
<rect x="48" y="184" width="1" height="1" fill="#8a8a8a"/>
<rect x="44" y="200" width="1" height="1" fill="#8a8a8a"/>
<rect x="46" y="200" width="1" height="1" fill="#8a8a8a"/>
<rect x="48" y="200" width="1" height="1" fill="#8a8a8a"/>
<rect x="44" y="216" width="1" height="1" fill="#8a8a8a"/>
<rect x="46" y="216" width="1" height="1" fill="#8a8a8a"/>
<rect x="48" y="216" width="1" height="1" fill="#8a8a8a"/>
<rect x="44" y="232" width="1" height="1" fill="#8a8a8a"/>
<rect x="46" y="232" width="1" height="1" fill="#8a8a8a"/>
<rect x="48" y="232" width="1" height="1" fill="#8a8a8a"/>
<rect x="44" y="248" width="1" height="1" fill="#8a8a8a"/>
<rect x="46" y="248" width="1" height="1" fill="#8a8a8a"/>
<rect x="48" y="248" width="1" height="1" fill="#8a8a8a"/>
<rect x="44" y="264" width="1" height="1" fill="#8a8a8a"/>
<rect x="46" y="264" width="1" height="1" fill="#8a8a8a"/>
<rect x="48" y="264" width="1" height="1" fill="#8a8a8a"/>
<rect x="44" y="280" width="1" height="1" fill="#8a8a8a"/>
<rect x="46" y="280" width="1" height="1" fill="#8a8a8a"/>
<rect x="48" y="280" width="1" height="1" fill="#8a8a8a"/>
<rect x="44" y="296" width="1" height="1" fill="#8a8a8a"/>
<rect x="46" y="296" width="1" height="1" fill="#8a8a8a"/>
<rect x="48" y="296" width="1" height="1" fill="#8a8a8a"/>
<rect x="59" y="312" width="1" height="1" fill="#8a8a8a"/>
<rect x="61" y="312" width="1" height="1" fill="#8a8a8a"/>
<rect x="63" y="312" width="1" height="1" fill="#8a8a8a"/>
<rect x="65" y="312" width="1" height="1" fill="#8a8a8a"/>
<rect x="67" y="312" width="1" height="1" fill="#8a8a8a"/>
<rect x="59" y="328" width="1" height="1" fill="#8a8a8a"/>
<rect x="61" y="328" width="1" height="1" fill="#8a8a8a"/>
<rect x="63" y="328" width="1" height="1" fill="#8a8a8a"/>
<rect x="65" y="328" width="1" height="1" fill="#8a8a8a"/>
<rect x="67" y="328" width="1" height="1" fill="#8a8a8a"/>
<rect x="59" y="344" width="1" height="1" fill="#8a8a8a"/>
<rect x="61" y="344" width="1" height="1" fill="#8a8a8a"/>
<rect x="63" y="344" width="1" height="1" fill="#8a8a8a"/>
<rect x="65" y="344" width="1" height="1" fill="#8a8a8a"/>
<rect x="67" y="344" width="1" height="1" fill="#8a8a8a"/>
<rect x="59" y="360" width="1" height="1" fill="#8a8a8a"/>
<rect x="61" y="360" width="1" height="1" fill="#8a8a8a"/>
<rect x="63" y="360" width="1" height="1" fill="#8a8a8a"/>
<rect x="65" y="360" width="1" height="1" fill="#8a8a8a"/>
<rect x="67" y="360" width="1" height="1" fill="#8a8a8a"/>
<rect x="59" y="376" width="1" height="1" fill="#8a8a8a"/>
<rect x="61" y="376" width="1" height="1" fill="#8a8a8a"/>
<rect x="63" y="376" width="1" height="1" fill="#8a8a8a"/>
<rect x="65" y="376" width="1" height="1" fill="#8a8a8a"/>
<rect x="67" y="376" width="1" height="1" fill="#8a8a8a"/>
<rect x="59" y="392" width="1" height="1" fill="#8a8a8a"/>
<rect x="61" y="392" width="1" height="1" fill="#8a8a8a"/>
<rect x="63" y="392" width="1" height="1" fill="#8a8a8a"/>
<rect x="65" y="392" width="1" height="1" fill="#8a8a8a"/>
<rect x="67" y="392" width="1" height="1" fill="#8a8a8a"/>
<rect x="59" y="408" width="1" height="1" fill="#8a8a8a"/>
<rect x="61" y="408" width="1" height="1" fill="#8a8a8a"/>
<rect x="63" y="408" width="1" height="1" fill="#8a8a8a"/>
<rect x="65" y="408" width="1" height="1" fill="#8a8a8a"/>
<rect x="67" y="408" width="1" height="1" fill="#8a8a8a"/>
<rect x="59" y="424" width="1" height="1" fill="#8a8a8a"/>
<rect x="61" y="424" width="1" height="1" fill="#8a8a8a"/>
<rect x="63" y="424" width="1" height="1" fill="#8a8a8a"/>
<rect x="65" y="424" width="1" height="1" fill="#8a8a8a"/>
<rect x="67" y="424" width="1" height="1" fill="#8a8a8a"/>
<rect x="59" y="440" width="1" height="1" fill="#8a8a8a"/>
<rect x="61" y="440" width="1" height="1" fill="#8a8a8a"/>
<rect x="63" y="440" width="1" height="1" fill="#8a8a8a"/>
<rect x="65" y="440" width="1" height="1" fill="#8a8a8a"/>
<rect x="67" y="440" width="1" height="1" fill="#8a8a8a"/>
<rect x="25" y="456" width="1" height="1" fill="#8a8a8a"/>
<rect x="27" y="456" width="1" height="1" fill="#8a8a8a"/>
<rect x="29" y="456" width="1" height="1" fill="#8a8a8a"/>
<use href="#tbl" x="10" y="94" width="16" height="17"/>
<use href="#plus" x="15" y="116" width="9" height="9"/>
<use href="#attr" x="30" y="112" width="16" height="16"/>
<use href="#minus" x="15" y="132" width="9" height="9"/>
<use href="#attr" x="30" y="128" width="16" height="16"/>
<use href="#plus" x="34" y="148" width="9" height="9"/>
<use href="#fold" x="49" y="146" width="16" height="13"/>
<use href="#plus" x="34" y="164" width="9" height="9"/>
<use href="#fold" x="49" y="162" width="16" height="13"/>
<use href="#plus" x="34" y="180" width="9" height="9"/>
<use href="#fold" x="49" y="178" width="16" height="13"/>
<use href="#plus" x="34" y="196" width="9" height="9"/>
<use href="#fold" x="49" y="194" width="16" height="13"/>
<use href="#plus" x="34" y="212" width="9" height="9"/>
<use href="#fold" x="49" y="210" width="16" height="13"/>
<use href="#plus" x="34" y="228" width="9" height="9"/>
<use href="#fold" x="49" y="226" width="16" height="13"/>
<use href="#plus" x="34" y="244" width="9" height="9"/>
<use href="#fold" x="49" y="242" width="16" height="13"/>
<use href="#plus" x="34" y="260" width="9" height="9"/>
<use href="#fold" x="49" y="258" width="16" height="13"/>
<use href="#plus" x="34" y="276" width="9" height="9"/>
<use href="#fold" x="49" y="274" width="16" height="13"/>
<use href="#minus" x="34" y="292" width="9" height="9"/>
<use href="#fold" x="49" y="290" width="16" height="13"/>
<use href="#tbl" x="67" y="302" width="16" height="17"/>
<use href="#tbl" x="67" y="318" width="16" height="17"/>
<use href="#tbl" x="67" y="334" width="16" height="17"/>
<use href="#tbl" x="67" y="350" width="16" height="17"/>
<use href="#tbl" x="67" y="366" width="16" height="17"/>
<use href="#tbl" x="67" y="382" width="16" height="17"/>
<use href="#tbl" x="67" y="398" width="16" height="17"/>
<use href="#tbl" x="67" y="414" width="16" height="17"/>
<use href="#tbl" x="67" y="430" width="16" height="17"/>
<use href="#plus" x="15" y="452" width="9" height="9"/>
<use href="#attr" x="30" y="448" width="16" height="16"/>
</svg>
<div style="left:239px;top:91px;width:555px;height:527px;border:1px solid #acacac;border-top-color:#dcdcdc;background:#fff;"></div>
<div style="left:503px;top:70px;width:291px;height:22px;border:1px solid #acacac;border-bottom:none;border-radius:3px 3px 0 0;background:linear-gradient(#ececec,#e0e0e0);"></div>
<div style="left:239px;top:69px;width:264px;height:23px;border:1px solid #c8c8c8;border-bottom:none;border-radius:3px 3px 0 0;background:#fff;"></div>
<div style="left:240px;top:91px;width:262px;height:1px;background:#e3e3e3;"></div>
<div style="left:503px;top:91px;width:291px;height:1px;background:#b4b4b4;"></div>
<svg style="left:0;top:0" width="1" height="1"><defs>
<radialGradient id="gCol" cx="0.5" cy="0.4" r="0.6"><stop offset="0" stop-color="#ffffff"/><stop offset="1" stop-color="#e9edf3"/></radialGradient>
<linearGradient id="gChat" x1="0" y1="0" x2="0" y2="1"><stop offset="0" stop-color="#ffbf8a"/><stop offset="0.45" stop-color="#ffc070"/><stop offset="0.55" stop-color="#ffcc00"/><stop offset="1" stop-color="#ffc400"/></linearGradient>
</defs></svg>
<div style="left:248px;top:100px;width:538px;height:108px;border:1px solid #b7cbe5;border-radius:5px;background:#fff;"></div>
<div style="left:248px;top:100px;width:538px;height:20px;background:linear-gradient(to right,#bed1e9 0%,#b8cce6 45%,#b3c8e2 85%,#aec3de 92%,#b5c9e3 100%);border-radius:5px 5px 0 0;"></div>
<div style="left:248px;top:119px;width:538px;height:1px;background:#cfdcee;"></div>
<svg style="left:762px;top:101px;" width="18" height="18" viewBox="0 0 18 18">
<circle cx="9" cy="9" r="7.8" fill="#fff" stroke="#8c9bb0" stroke-width="1"/>
<circle cx="9" cy="9" r="6.5" fill="url(#gCol)"/>
<path d="M6.2 9 L9 6.2 L11.8 9 M6.2 12 L9 9.2 L11.8 12" stroke="#13295e" stroke-width="1.3" fill="none"/>
</svg>
<div style="left:314px;top:124px;width:442px;height:24px;border:1px solid #ec1c24;background:#fff;border-width:3px;"></div>
<div style="left:315px;top:153px;width:440px;height:22px;border:1px solid #abadb3;background:#fff;"></div>
<div style="left:315px;top:181px;width:440px;height:22px;border:1px solid #abadb3;background:#fff;"></div>
<div style="left:756px;top:126px;width:22px;height:20px;border:1px solid #c3c3c3;background:#e1e1e1;"></div>
<svg style="left:756px;top:126px;" width="22" height="20" viewBox="0 0 22 20"><rect x="4" y="3" width="1" height="1" fill="#1f5cf0"/><rect x="3" y="4" width="1" height="1" fill="#1f5cf0"/><rect x="4" y="5" width="1" height="1" fill="#1f5cf0"/><rect x="5" y="6" width="1" height="1" fill="#1f5cf0"/><rect x="8" y="15" width="1" height="1" fill="#1f5cf0"/><rect x="9" y="14" width="1" height="1" fill="#1f5cf0"/><rect x="10" y="13" width="1" height="1" fill="#1f5cf0"/><rect x="9" y="16" width="1" height="1" fill="#1f5cf0"/><rect x="15" y="3" width="1" height="1" fill="#1f5cf0"/><rect x="16" y="4" width="1" height="1" fill="#1f5cf0"/><rect x="15" y="5" width="1" height="1" fill="#1f5cf0"/><rect x="14" y="6" width="1" height="1" fill="#1f5cf0"/><rect x="16" y="13" width="1" height="1" fill="#1f5cf0"/><rect x="17" y="14" width="1" height="1" fill="#1f5cf0"/><rect x="18" y="15" width="1" height="1" fill="#1f5cf0"/><rect x="17" y="16" width="1" height="1" fill="#1f5cf0"/><rect x="6" y="7" width="1" height="1" fill="#1aa0dc"/><rect x="6" y="9" width="1" height="1" fill="#1aa0dc"/><rect x="6" y="11" width="1" height="1" fill="#1aa0dc"/><rect x="6" y="13" width="1" height="1" fill="#1aa0dc"/><rect x="6" y="15" width="1" height="1" fill="#1aa0dc"/><rect x="7" y="15" width="1" height="1" fill="#1aa0dc"/><path d="M11.3 10 C11.3 7.6 15.5 7.6 15.5 10 C15.5 11.5 13.5 11.6 13.5 13" stroke="#8a4a12" stroke-width="1.7" fill="none"/><rect x="12.5" y="14" width="2" height="1.6" fill="#8a4a12"/></svg>
<div style="left:756px;top:154px;width:22px;height:20px;border:1px solid #5a5a5a;background:#e8e8e8;"></div>
<svg style="left:756px;top:154px;" width="22" height="20" viewBox="0 0 22 20"><ellipse cx="11" cy="8.3" rx="7" ry="5.1" fill="url(#gChat)" stroke="#d9831c" stroke-width="1" stroke-dasharray="1.2 0.8"/>
<path d="M9.3 13 L8.3 16.5 L11.5 13.2 Z" fill="#f2b81a" stroke="#c87a18" stroke-width="0.8"/>
<path d="M6.5 7v2.5h1.3M8.5 7v2.5h1.3" stroke="#b07a3a" stroke-width="0.9" fill="none"/>
<path d="M12.8 7v2.5M14.3 7v2.5M15.8 7v1.5" stroke="#e8500a" stroke-width="1" fill="none"/></svg>
<div style="left:756px;top:182px;width:22px;height:20px;border:1px solid #5a5a5a;background:#e8e8e8;"></div>
<svg style="left:756px;top:182px;" width="22" height="20" viewBox="0 0 22 20"><ellipse cx="11" cy="8.3" rx="7" ry="5.1" fill="url(#gChat)" stroke="#d9831c" stroke-width="1" stroke-dasharray="1.2 0.8"/>
<path d="M9.3 13 L8.3 16.5 L11.5 13.2 Z" fill="#f2b81a" stroke="#c87a18" stroke-width="0.8"/>
<path d="M6.5 7v2.5h1.3M8.5 7v2.5h1.3" stroke="#b07a3a" stroke-width="0.9" fill="none"/>
<path d="M12.8 7v2.5M14.3 7v2.5M15.8 7v1.5" stroke="#e8500a" stroke-width="1" fill="none"/></svg>
<div style="left:248px;top:210px;width:538px;height:126px;border:1px solid #b7cbe5;border-radius:5px;background:#fff;"></div>
<div style="left:248px;top:210px;width:538px;height:19px;background:linear-gradient(to right,#bed1e9 0%,#b8cce6 45%,#b3c8e2 85%,#aec3de 92%,#b5c9e3 100%);border-radius:5px 5px 0 0;"></div>
<div style="left:248px;top:228px;width:538px;height:1px;background:#cfdcee;"></div>
<svg style="left:762px;top:211px;" width="18" height="18" viewBox="0 0 18 18">
<circle cx="9" cy="9" r="7.8" fill="#fff" stroke="#8c9bb0" stroke-width="1"/>
<circle cx="9" cy="9" r="6.5" fill="url(#gCol)"/>
<path d="M6.2 9 L9 6.2 L11.8 9 M6.2 12 L9 9.2 L11.8 12" stroke="#13295e" stroke-width="1.3" fill="none"/>
</svg>
<div style="left:333px;top:234px;width:160px;height:21px;border:1px solid #7a7a7a;background:#fff;"></div>
<svg style="left:480px;top:242px;" width="9" height="6" viewBox="0 0 9 6"><path d="M0.5 0.8 L4.5 4.8 L8.5 0.8" stroke="#444" stroke-width="1" fill="none"/></svg>
<div style="left:494px;top:235px;width:22px;height:20px;border:1px solid #5a5a5a;background:#e1e1e1;"></div>
<svg style="left:494px;top:235px;" width="22" height="20" viewBox="0 0 22 20"><ellipse cx="11" cy="8.3" rx="7" ry="5.1" fill="url(#gChat)" stroke="#d9831c" stroke-width="1" stroke-dasharray="1.2 0.8"/>
<path d="M9.3 13 L8.3 16.5 L11.5 13.2 Z" fill="#f2b81a" stroke="#c87a18" stroke-width="0.8"/>
<path d="M6.5 7v2.5h1.3M8.5 7v2.5h1.3" stroke="#b07a3a" stroke-width="0.9" fill="none"/>
<path d="M12.8 7v2.5M14.3 7v2.5M15.8 7v1.5" stroke="#e8500a" stroke-width="1" fill="none"/></svg>
<div style="left:556px;top:234px;width:154px;height:21px;border:1px solid #adadad;background:#e5e5e5;"></div>
<svg style="left:697px;top:242px;" width="9" height="6" viewBox="0 0 9 6"><path d="M0.5 0.8 L4.5 4.8 L8.5 0.8" stroke="#444" stroke-width="1" fill="none"/></svg>
<svg style="left:716px;top:238px;" width="13" height="13" viewBox="0 0 13 13"><rect x="0.5" y="0.5" width="12" height="12" fill="#fff" stroke="#cccccc"/></svg>
<div style="left:333px;top:260px;width:136px;height:22px;border:1px solid #abadb3;background:#fff;"></div>
<div style="left:470px;top:261px;width:22px;height:20px;border:1px solid #adadad;background:#e1e1e1;"></div>
<svg style="left:470px;top:261px;" width="22" height="20" viewBox="0 0 22 20"><path d="M3.2 10.2 L5 9.2 L7.3 15.8 L11.4 3.5 H18.3 V5.8" stroke="#000" stroke-width="1.9" fill="none" stroke-linejoin="miter"/><path d="M11.5 10 Q12.5 9 16.5 9.5 L15.5 16 H10.5 Q10 14 11.5 12.5 H14 L14.2 11.5 H11 Z" fill="#ffd200" stroke="#111" stroke-width="0.9"/><rect x="13.2" y="10.7" width="1" height="1" fill="#111"/><rect x="12.8" y="13.6" width="1" height="1" fill="#111"/></svg>
<div style="left:494px;top:261px;width:22px;height:20px;border:1px solid #adadad;background:#e1e1e1;"></div>
<svg style="left:494px;top:261px;" width="22" height="20" viewBox="0 0 22 20"><path d="M14.5 7.3 V6.2 H7.5 M14.5 12.7 V13.8 H7.5" stroke="#111" stroke-width="1.1" fill="none"/><path d="M7.8 6.2 L11.2 10 L7.8 13.8" stroke="#111" stroke-width="1.7" fill="none"/></svg>
<svg style="left:654px;top:264px;" width="13" height="13" viewBox="0 0 13 13"><rect x="0.5" y="0.5" width="12" height="12" fill="#fff" stroke="#333333"/><path d="M2.5 6.5 L5 9.2 L10.5 3.2" stroke="#222" stroke-width="1.2" fill="none"/></svg>
<svg style="left:716px;top:264px;" width="13" height="13" viewBox="0 0 13 13"><rect x="0.5" y="0.5" width="12" height="12" fill="#fff" stroke="#333333"/><path d="M2.5 6.5 L5 9.2 L10.5 3.2" stroke="#222" stroke-width="1.2" fill="none"/></svg>
<div style="left:333px;top:286px;width:136px;height:22px;border:1px solid #abadb3;background:#fff;"></div>
<div style="left:470px;top:287px;width:22px;height:20px;border:1px solid #bdbdbd;background:#d6d6d6;"></div>
<svg style="left:470px;top:287px;" width="22" height="20" viewBox="0 0 22 20"><path d="M3.2 10.2 L5 9.2 L7.3 15.8 L11.4 3.5 H18.3 V5.8" stroke="#787878" stroke-width="1.8" fill="none"/><path d="M11.5 10 Q12.5 9 16.5 9.5 L15.5 16 H10.5 Q10 14 11.5 12.5 H14 L14.2 11.5 H11 Z" fill="#ececec" stroke="#787878" stroke-width="0.9"/></svg>
<div style="left:494px;top:287px;width:22px;height:20px;border:1px solid #bdbdbd;background:#d6d6d6;"></div>
<svg style="left:494px;top:287px;" width="22" height="20" viewBox="0 0 22 20"><path d="M14.5 7.3 V6.2 H7.5 M14.5 12.7 V13.8 H7.5" stroke="#8e8e8e" stroke-width="1.1" fill="none"/><path d="M7.8 6.2 L11.2 10 L7.8 13.8" stroke="#8e8e8e" stroke-width="1.7" fill="none"/></svg>
<div style="left:333px;top:314px;width:136px;height:21px;border:1px solid #abadb3;background:#fff;border-bottom:none;"></div>
<div style="left:470px;top:314px;width:22px;height:21px;border:1px solid #bdbdbd;background:#d6d6d6;"></div>
<svg style="left:470px;top:314px;" width="22" height="20" viewBox="0 0 22 20"><path d="M3.2 10.2 L5 9.2 L7.3 15.8 L11.4 3.5 H18.3 V5.8" stroke="#787878" stroke-width="1.8" fill="none"/><path d="M11.5 10 Q12.5 9 16.5 9.5 L15.5 16 H10.5 Q10 14 11.5 12.5 H14 L14.2 11.5 H11 Z" fill="#ececec" stroke="#787878" stroke-width="0.9"/></svg>
<div style="left:494px;top:314px;width:22px;height:21px;border:1px solid #bdbdbd;background:#d6d6d6;"></div>
<svg style="left:494px;top:314px;" width="22" height="20" viewBox="0 0 22 20"><path d="M14.5 7.3 V6.2 H7.5 M14.5 12.7 V13.8 H7.5" stroke="#8e8e8e" stroke-width="1.1" fill="none"/><path d="M7.8 6.2 L11.2 10 L7.8 13.8" stroke="#8e8e8e" stroke-width="1.7" fill="none"/></svg>
<svg style="left:615px;top:318px;" width="13" height="13" viewBox="0 0 13 13"><rect x="0.5" y="0.5" width="12" height="12" fill="#fff" stroke="#333333"/><path d="M2.5 6.5 L5 9.2 L10.5 3.2" stroke="#222" stroke-width="1.2" fill="none"/></svg>
<div style="left:248px;top:338px;width:278px;height:82px;border:1px solid #b7cbe5;border-radius:5px;background:#fff;"></div>
<div style="left:248px;top:338px;width:278px;height:20px;background:linear-gradient(to right,#bed1e9 0%,#b8cce6 45%,#b3c8e2 85%,#aec3de 92%,#b5c9e3 100%);border-radius:5px 5px 0 0;"></div>
<div style="left:248px;top:357px;width:278px;height:1px;background:#cfdcee;"></div>
<div style="left:315px;top:363px;width:204px;height:22px;border:1px solid #abadb3;background:#fff;"></div>
<div style="left:315px;top:391px;width:204px;height:22px;border:1px solid #abadb3;background:#fff;"></div>
<div style="left:528px;top:338px;width:258px;height:82px;border:1px solid #b7cbe5;border-radius:5px;background:#fff;"></div>
<div style="left:528px;top:338px;width:258px;height:20px;background:linear-gradient(to right,#bed1e9 0%,#b8cce6 45%,#b3c8e2 85%,#aec3de 92%,#b5c9e3 100%);border-radius:5px 5px 0 0;"></div>
<div style="left:528px;top:357px;width:258px;height:1px;background:#cfdcee;"></div>
<div style="left:593px;top:363px;width:114px;height:22px;border:1px solid #adadad;background:#e3e3e3;"></div>
<div style="left:708px;top:364px;width:22px;height:20px;border:1px solid #c3c3c3;background:#e1e1e1;"></div>
<svg style="left:708px;top:364px;" width="22" height="20" viewBox="0 0 22 20"><defs><linearGradient id="gEr" x1="0" y1="0" x2="1" y2="0"><stop offset="0" stop-color="#ffffff"/><stop offset="1" stop-color="#c8c8c8"/></linearGradient><linearGradient id="gEr2" x1="0" y1="0" x2="1" y2="0"><stop offset="0" stop-color="#f8b8c8"/><stop offset="1" stop-color="#e07090"/></linearGradient></defs>
<g transform="rotate(45 11 10)"><rect x="8" y="2.5" width="6" height="15" rx="2.3" fill="url(#gEr)" stroke="#a8a8a8" stroke-width="0.7"/><path d="M8 7.5 V4.8 Q8 2.5 10.3 2.5 H11.7 Q14 2.5 14 4.8 V7.5 Z" fill="url(#gEr2)" stroke="#d06080" stroke-width="0.5"/></g></svg>
<div style="left:732px;top:364px;width:22px;height:20px;border:1px solid #adadad;background:#e1e1e1;"></div>
<svg style="left:735px;top:367px;" width="15" height="14" viewBox="0 0 15 14"><defs><linearGradient id="gB2" x1="0" y1="0" x2="1" y2="0"><stop offset="0" stop-color="#24409a"/><stop offset="0.45" stop-color="#6a92e8"/><stop offset="1" stop-color="#1c3090"/></linearGradient></defs>
<path d="M3.5 0.5 H6 V3 L7.5 5.5 V13.5 H0.5 V6 L3.5 3 Z" fill="url(#gB2)" stroke="#1a2a80" stroke-width="0.7"/>
<path d="M9 0.5 H11.5 V3 L14.5 6 V13.5 H7.5 V5.5 L9 3 Z" fill="url(#gB2)" stroke="#1a2a80" stroke-width="0.7"/>
<rect x="6.5" y="6" width="2" height="3" fill="#1c2c80"/>
<rect x="1.3" y="9" width="5.4" height="4" fill="#e8eefc"/><rect x="8.3" y="9" width="5.4" height="4" fill="#e8eefc"/>
<path d="M4 1.5v1.5M10.5 1.5v1.5" stroke="#c8d8ff" stroke-width="0.8"/></svg>
<div style="left:756px;top:364px;width:22px;height:20px;border:1px solid #adadad;background:#e1e1e1;"></div>
<svg style="left:760px;top:367px;" width="15" height="15" viewBox="0 0 15 15"><defs><linearGradient id="gGr" x1="0" y1="0" x2="0" y2="1"><stop offset="0" stop-color="#3cc04a"/><stop offset="1" stop-color="#128a22"/></linearGradient></defs>
<rect x="0.5" y="0.5" width="14" height="14" rx="2" fill="url(#gGr)" stroke="#0e7a1c" stroke-width="0.8"/>
<path d="M3 7.3 H11.5 M7.5 3.6 L11.2 7.3 L7.5 11" stroke="#fff" stroke-width="1.2" fill="none"/></svg>
<div style="left:593px;top:391px;width:188px;height:20px;border:1px solid #7a7a7a;background:#fff;"></div>
<div style="left:248px;top:422px;width:339px;height:188px;border:1px solid #b7cbe5;border-radius:5px;background:#fff;"></div>
<div style="left:248px;top:422px;width:339px;height:20px;background:linear-gradient(to right,#bed1e9 0%,#b8cce6 45%,#b3c8e2 85%,#aec3de 92%,#b5c9e3 100%);border-radius:5px 5px 0 0;"></div>
<div style="left:248px;top:441px;width:339px;height:1px;background:#cfdcee;"></div>
<svg style="left:567px;top:427px;" width="13" height="13" viewBox="0 0 13 13"><rect x="0.5" y="0.5" width="12" height="12" fill="#fff" stroke="#333333"/></svg>
<div style="left:251px;top:444px;width:333px;height:162px;background:#ababab;"></div>
<div style="left:251px;top:444px;width:333px;height:43px;background:#fff;border-top:1px solid #a0a0a0;"></div>
<div style="left:251px;top:464px;width:333px;height:1px;background:#a0a0a0;"></div>
<div style="left:251px;top:486px;width:333px;height:1px;background:#a0a0a0;"></div>
<div style="left:251px;top:444px;width:1px;height:43px;background:#a0a0a0;"></div>
<div style="left:583px;top:444px;width:1px;height:43px;background:#a0a0a0;"></div>
<div style="left:291px;top:444px;width:1px;height:43px;background:#a0a0a0;"></div>
<div style="left:520px;top:445px;width:1px;height:19px;background:#e2e2e2;"></div>
<div style="left:520px;top:465px;width:1px;height:21px;background:#a0a0a0;"></div>
<div style="left:541px;top:445px;width:1px;height:19px;background:#e2e2e2;"></div>
<div style="left:541px;top:465px;width:1px;height:21px;background:#a0a0a0;"></div>
<div style="left:562px;top:445px;width:1px;height:19px;background:#e2e2e2;"></div>
<div style="left:562px;top:465px;width:1px;height:21px;background:#a0a0a0;"></div>
<svg style="left:260px;top:474px;" width="6" height="6" viewBox="0 0 6 6"><circle cx="3" cy="3" r="2.7" fill="#3c3c3c"/><path d="M3 1.2v3.6M1.2 3h3.6" stroke="#8a8a8a" stroke-width="0.6"/></svg>
<div style="left:589px;top:425px;width:197px;height:185px;border:1px solid #b7cbe5;border-radius:5px;background:#fff;"></div>
<div style="left:589px;top:425px;width:197px;height:20px;background:linear-gradient(to right,#bed1e9 0%,#b8cce6 45%,#b3c8e2 85%,#aec3de 92%,#b5c9e3 100%);border-radius:5px 5px 0 0;"></div>
<div style="left:589px;top:444px;width:197px;height:1px;background:#cfdcee;"></div>
<svg style="left:595px;top:452px;" width="13" height="13" viewBox="0 0 13 13"><rect x="0.5" y="0.5" width="12" height="12" fill="#fff" stroke="#333333"/></svg>
<svg style="left:595px;top:476px;" width="13" height="13" viewBox="0 0 13 13"><rect x="0.5" y="0.5" width="12" height="12" fill="#fff" stroke="#333333"/></svg>
<svg style="left:595px;top:500px;" width="13" height="13" viewBox="0 0 13 13"><rect x="0.5" y="0.5" width="12" height="12" fill="#fff" stroke="#333333"/></svg>
<svg style="left:595px;top:524px;" width="13" height="13" viewBox="0 0 13 13"><rect x="0.5" y="0.5" width="12" height="12" fill="#fff" stroke="#333333"/><path d="M2.5 6.5 L5 9.2 L10.5 3.2" stroke="#222" stroke-width="1.2" fill="none"/></svg>
<svg style="left:595px;top:548px;" width="13" height="13" viewBox="0 0 13 13"><rect x="0.5" y="0.5" width="12" height="12" fill="#fff" stroke="#333333"/><path d="M2.5 6.5 L5 9.2 L10.5 3.2" stroke="#222" stroke-width="1.2" fill="none"/></svg>
<svg style="left:595px;top:572px;" width="13" height="13" viewBox="0 0 13 13"><rect x="0.5" y="0.5" width="12" height="12" fill="#fff" stroke="#333333"/><path d="M2.5 6.5 L5 9.2 L10.5 3.2" stroke="#222" stroke-width="1.2" fill="none"/></svg>
<div class="t" style="left:30.00px;top:4.84px;font-size:12px;letter-spacing:0.024px;transform-origin:0 0;transform:scaleX(1.0045);color:#000;">Editor de Atributos - System\Atributos\entidade.attributes\Drawer Box Report\Acabar</div>
<div class="t" style="left:575.06px;top:44.84px;font-size:12px;letter-spacing:-0.515px;transform-origin:0 0;transform:scaleX(0.9405);color:#fff;">DEFAULT</div>
<div class="t" style="left:31.00px;top:92.84px;font-size:12px;letter-spacing:-0.256px;transform-origin:0 0;transform:scaleX(0.9565);color:#000;">Atributos</div>
<div class="t" style="left:50.00px;top:108.84px;font-size:12px;letter-spacing:-0.223px;transform-origin:0 0;transform:scaleX(0.9616);color:#000;">property.category</div>
<div class="t" style="left:50.00px;top:124.84px;font-size:12px;letter-spacing:-0.285px;transform-origin:0 0;transform:scaleX(0.9482);color:#000;">entidade.attributes</div>
<div class="t" style="left:69.05px;top:140.84px;font-size:12px;letter-spacing:-0.308px;transform-origin:0 0;transform:scaleX(0.9469);color:#000;">Entity</div>
<div class="t" style="left:69.01px;top:156.84px;font-size:12px;letter-spacing:-0.084px;transform-origin:0 0;transform:scaleX(0.9856);color:#000;">Pricing</div>
<div class="t" style="left:69.04px;top:172.84px;font-size:12px;letter-spacing:-0.255px;transform-origin:0 0;transform:scaleX(0.9630);color:#000;">Dimensions</div>
<div class="t" style="left:69.04px;top:188.84px;font-size:12px;letter-spacing:-0.255px;transform-origin:0 0;transform:scaleX(0.9645);color:#000;">Drawing</div>
<div class="t" style="left:69.04px;top:204.84px;font-size:12px;letter-spacing:-0.292px;transform-origin:0 0;transform:scaleX(0.9592);color:#000;">Database</div>
<div class="t" style="left:69.04px;top:220.84px;font-size:12px;letter-spacing:-0.256px;transform-origin:0 0;transform:scaleX(0.9562);color:#000;">Insight</div>
<div class="t" style="left:69.04px;top:236.84px;font-size:12px;letter-spacing:-0.226px;transform-origin:0 0;transform:scaleX(0.9636);color:#000;">Production</div>
<div class="t" style="left:69.04px;top:252.84px;font-size:12px;letter-spacing:-0.255px;transform-origin:0 0;transform:scaleX(0.9595);color:#000;">Kitchens FF</div>
<div class="t" style="left:69.03px;top:268.84px;font-size:12px;letter-spacing:-0.203px;transform-origin:0 0;transform:scaleX(0.9672);color:#000;">Kitchens FL</div>
<div class="t" style="left:69.04px;top:284.84px;font-size:12px;letter-spacing:-0.239px;transform-origin:0 0;transform:scaleX(0.9622);color:#000;">Drawer Box Report</div>
<div class="t" style="left:89.00px;top:300.84px;font-size:12px;letter-spacing:-0.267px;transform-origin:0 0;transform:scaleX(0.9549);color:#000;">Apresentado no Relatório</div>
<div class="t" style="left:89.00px;top:316.84px;font-size:12px;letter-spacing:-0.255px;transform-origin:0 0;transform:scaleX(0.9586);color:#000;">Tipo de Caixa</div>
<div class="t" style="left:89.00px;top:332.84px;font-size:12px;letter-spacing:-0.221px;transform-origin:0 0;transform:scaleX(0.9610);color:#000;">Tipo de Material</div>
<div class="t" style="left:88.02px;top:348.84px;font-size:12px;letter-spacing:-0.145px;transform-origin:0 0;transform:scaleX(0.9753);color:#000;">Material</div>
<div class="t" style="left:89.00px;top:364.84px;font-size:12px;letter-spacing:-0.370px;transform-origin:0 0;transform:scaleX(0.9503);color:#fff;">Acabamento</div>
<div class="t" style="left:88.03px;top:380.84px;font-size:12px;letter-spacing:-0.222px;transform-origin:0 0;transform:scaleX(0.9682);color:#000;">Espessura</div>
<div class="t" style="left:88.04px;top:396.84px;font-size:12px;letter-spacing:-0.255px;transform-origin:0 0;transform:scaleX(0.9579);color:#000;">Largura da Caixa</div>
<div class="t" style="left:88.04px;top:412.84px;font-size:12px;letter-spacing:-0.255px;transform-origin:0 0;transform:scaleX(0.9578);color:#000;">Profundidade da Caixa</div>
<div class="t" style="left:89.00px;top:428.84px;font-size:12px;letter-spacing:-0.237px;transform-origin:0 0;transform:scaleX(0.9595);color:#000;">Altura da Caixa</div>
<div class="t" style="left:50.00px;top:444.84px;font-size:12px;letter-spacing:-0.197px;transform-origin:0 0;transform:scaleX(0.9630);color:#000;">sugestaoctrl.attributes</div>
<div class="t" style="left:246.98px;top:71.84px;font-size:12px;letter-spacing:0.124px;transform-origin:0 0;transform:scaleX(1.0220);color:#000;">Principal</div>
<div class="t" style="left:511.00px;top:71.84px;font-size:12px;letter-spacing:-0.774px;transform-origin:0 0;transform:scaleX(0.9381);color:#000;">XML</div>
<div class="t" style="left:256.03px;top:99.84px;font-size:12px;letter-spacing:-0.190px;transform-origin:0 0;transform:scaleX(0.9689);color:#0b0b0b;">Definição</div>
<div class="t" style="left:256.05px;top:125.84px;font-size:12px;letter-spacing:-0.512px;transform-origin:0 0;transform:scaleX(0.9535);color:#000;">ID</div>
<div class="t" style="left:256.05px;top:153.84px;font-size:12px;letter-spacing:-0.513px;transform-origin:0 0;transform:scaleX(0.9504);color:#000;">Nome</div>
<div class="t" style="left:256.01px;top:181.84px;font-size:12px;letter-spacing:-0.094px;transform-origin:0 0;transform:scaleX(0.9855);color:#000;">Descrição</div>
<div class="t" style="left:319.00px;top:125.84px;font-size:12px;letter-spacing:0.013px;transform-origin:0 0;transform:scaleX(1.0017);color:#000;">DRAWER_BOX_FINISHING</div>
<div class="t" style="left:320.00px;top:153.84px;font-size:12px;letter-spacing:0.000px;transform-origin:0 0;transform:scaleX(1.0000);color:#000;">Acabamento</div>
<div class="t" style="left:319.00px;top:181.84px;font-size:12px;letter-spacing:0.000px;transform-origin:0 0;transform:scaleX(1.0000);color:#000;">Define o acabamento da caixa</div>
<div class="t" style="left:256.05px;top:208.84px;font-size:12px;letter-spacing:-0.313px;transform-origin:0 0;transform:scaleX(0.9539);color:#0b0b0b;">Parâmetros</div>
<div class="t" style="left:256.00px;top:234.84px;font-size:12px;letter-spacing:-0.385px;transform-origin:0 0;transform:scaleX(0.9465);color:#000;">Agrupamento</div>
<div class="t" style="left:256.00px;top:260.84px;font-size:12px;letter-spacing:-0.232px;transform-origin:0 0;transform:scaleX(0.9625);color:#000;">Valor padrão</div>
<div class="t" style="left:256.00px;top:286.84px;font-size:12px;letter-spacing:-0.231px;transform-origin:0 0;transform:scaleX(0.9636);color:#000;">Valor Mínimo</div>
<div class="t" style="left:256.00px;top:314.84px;font-size:12px;letter-spacing:-0.184px;transform-origin:0 0;transform:scaleX(0.9718);color:#000;">Valor Máximo</div>
<div class="t" style="left:335.06px;top:233.84px;font-size:12px;letter-spacing:-0.404px;transform-origin:0 0;transform:scaleX(0.9361);color:#000;">Drawer Box Report</div>
<div class="t" style="left:526.00px;top:234.84px;font-size:12px;letter-spacing:-0.254px;transform-origin:0 0;transform:scaleX(0.9668);color:#000;">Tipo</div>
<div class="t" style="left:560.00px;top:234.84px;font-size:12px;letter-spacing:-0.385px;transform-origin:0 0;transform:scaleX(0.9469);color:#000;">Texto</div>
<div class="t" style="left:733.07px;top:233.84px;font-size:12px;letter-spacing:-0.517px;transform-origin:0 0;transform:scaleX(0.9337);color:#8d8d8d;">Medida</div>
<div class="t" style="left:671.00px;top:260.84px;font-size:12px;letter-spacing:-0.126px;transform-origin:0 0;transform:scaleX(0.9783);color:#000;">Visível</div>
<div class="t" style="left:732.02px;top:260.84px;font-size:12px;letter-spacing:-0.108px;transform-origin:0 0;transform:scaleX(0.9815);color:#000;">Editável</div>
<div class="t" style="left:632.04px;top:314.84px;font-size:12px;letter-spacing:-0.206px;transform-origin:0 0;transform:scaleX(0.9644);color:#000;">Manter valor ao desassociar</div>
<div class="t" style="left:257.00px;top:337.84px;font-size:12px;letter-spacing:-0.255px;transform-origin:0 0;transform:scaleX(0.9610);color:#0b0b0b;">Tag Agrupadora</div>
<div class="t" style="left:256.05px;top:363.84px;font-size:12px;letter-spacing:-0.513px;transform-origin:0 0;transform:scaleX(0.9504);color:#000;">Nome</div>
<div class="t" style="left:256.01px;top:391.84px;font-size:12px;letter-spacing:-0.094px;transform-origin:0 0;transform:scaleX(0.9855);color:#000;">Descrição</div>
<div class="t" style="left:537.00px;top:337.84px;font-size:12px;letter-spacing:-0.141px;transform-origin:0 0;transform:scaleX(0.9770);color:#0b0b0b;">Assistente</div>
<div class="t" style="left:536.00px;top:363.84px;font-size:12px;letter-spacing:-0.288px;transform-origin:0 0;transform:scaleX(0.9558);color:#000;">Categoria</div>
<div class="t" style="left:536.00px;top:390.84px;font-size:12px;letter-spacing:-0.254px;transform-origin:0 0;transform:scaleX(0.9718);color:#000;">Ordem</div>
<div class="t" style="left:257.00px;top:421.84px;font-size:12px;letter-spacing:-0.255px;transform-origin:0 0;transform:scaleX(0.9574);color:#0b0b0b;">Valores propostos</div>
<div class="t" style="left:371.00px;top:422.84px;font-size:12px;letter-spacing:-0.218px;transform-origin:0 0;transform:scaleX(0.9620);color:#000;">Aceitar somente os valores propostos</div>
<div class="t" style="left:299.00px;top:444.84px;font-size:12px;letter-spacing:-0.520px;transform-origin:0 0;transform:scaleX(0.9220);color:#000;">Valores</div>
<div class="t" style="left:598.00px;top:424.84px;font-size:12px;letter-spacing:-0.341px;transform-origin:0 0;transform:scaleX(0.9524);color:#0b0b0b;">Comportamento</div>
<div class="t" style="left:611.54px;top:447.84px;font-size:12px;letter-spacing:-0.246px;transform-origin:0 0;transform:scaleX(0.9582);color:#000;">Lançar evento ao mudar valor</div>
<div class="t" style="left:612.50px;top:471.84px;font-size:12px;letter-spacing:-0.271px;transform-origin:0 0;transform:scaleX(0.9558);color:#000;">Criação automática</div>
<div class="t" style="left:612.50px;top:495.84px;font-size:12px;letter-spacing:-0.299px;transform-origin:0 0;transform:scaleX(0.9487);color:#000;">Alterar forma</div>
<div class="t" style="left:612.50px;top:519.84px;font-size:12px;letter-spacing:-0.242px;transform-origin:0 0;transform:scaleX(0.9597);color:#000;">Atualização dinâmica</div>
<div class="t" style="left:611.54px;top:543.84px;font-size:12px;letter-spacing:-0.269px;transform-origin:0 0;transform:scaleX(0.9574);color:#000;">Propriedade avançada</div>
<div class="t" style="left:611.54px;top:567.84px;font-size:12px;letter-spacing:-0.197px;transform-origin:0 0;transform:scaleX(0.9636);color:#000;">Salvar junto ao projeto</div>
<svg style="position:absolute;left:80px;top:270px" width="80" height="110" viewBox="0 0 80 110">
<path d="M39.2 16.8 L39.3 78" stroke="#f00" stroke-width="7.2" stroke-linecap="round" fill="none"/>
<path d="M22.8 60.5 Q32 69 38.6 86 Q45 69 52.8 58.5" stroke="#f00" stroke-width="8" stroke-linecap="round" stroke-linejoin="round" fill="none"/>
<path d="M34 78 L38.6 92 L43.2 78 Z" fill="#f00"/>
</svg>
</body></html>
